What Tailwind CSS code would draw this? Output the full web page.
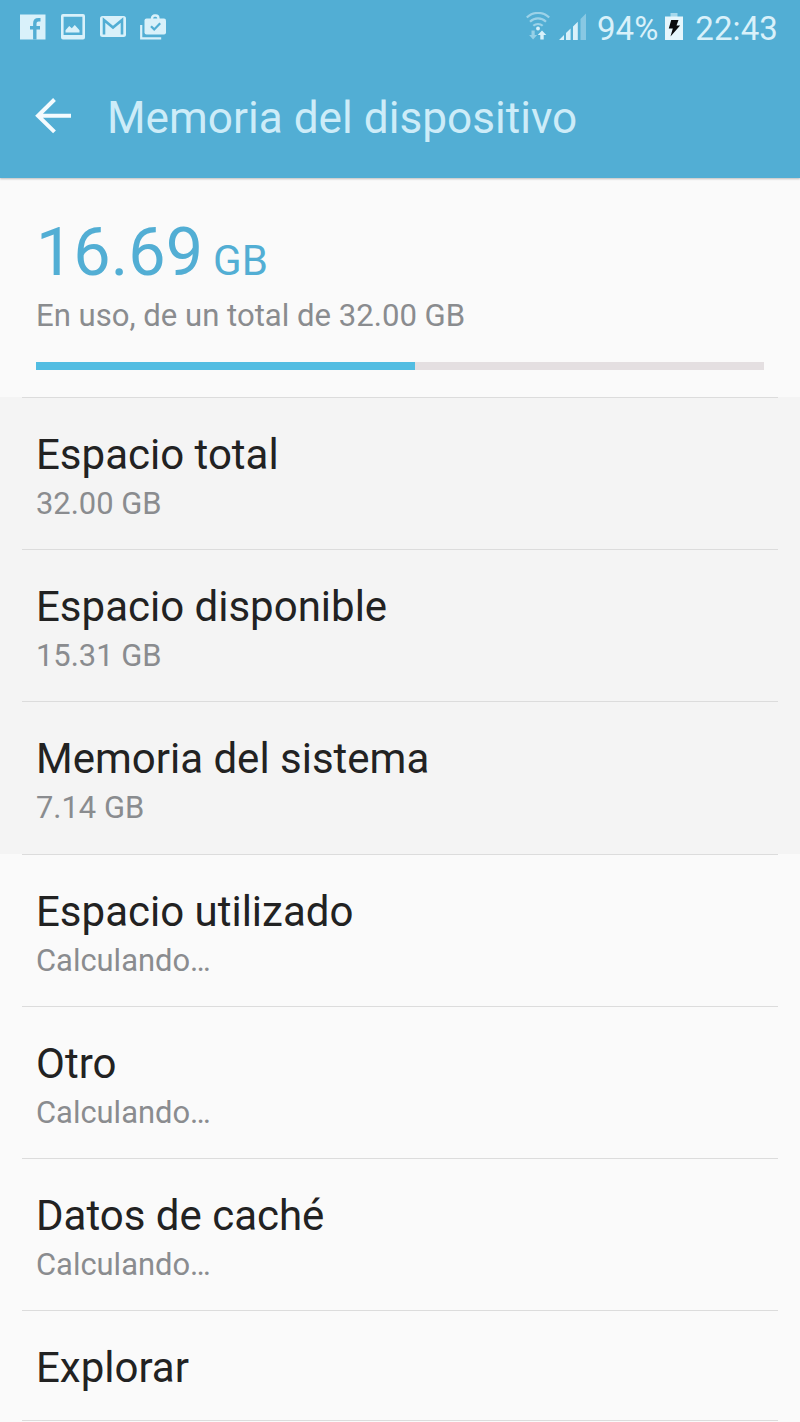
<!DOCTYPE html>
<html lang="es">
<head>
  <meta charset="UTF-8">
  <title>Memoria del dispositivo</title>
  <script src="https://cdn.jsdelivr.net/npm/@tailwindcss/browser@4"></script>
</head>
<body class="w-[800px] h-[1422px] overflow-hidden bg-[#fafafa] font-[Roboto,sans-serif] text-[#222222]">
  <header class="h-[178px] bg-[#52aed4] shadow-[0_1px_2px_rgba(0,0,0,0.25)]">
    <!-- Barra de estado -->
    <div class="h-[56px] flex items-center justify-between pl-5 pr-[22px] text-[#d9f1fa]">
      <div class="flex items-center pb-[2px]">
        <svg class="w-[26px] h-[26px]" viewBox="0 0 26 26">
          <path d="M0 .5h25.500v25H0z" fill="currentColor"/>
          <path d="M14.800 25.500V9.500q0-3.700 3.700-3.700h2M10 13.700h10" fill="none" stroke="#52aed4" stroke-width="3.400"/>
        </svg>
        <svg class="w-[26px] h-[26px] ml-[14px]" viewBox="0 0 26 26">
          <path d="M3 0h20a2 2 0 0 1 2 2v21.500a2 2 0 0 1-2 2H3a2 2 0 0 1-2-2V2a2 2 0 0 1 2-2zM3.600 2.800v18.200h18.800V2.800z" fill="currentColor" fill-rule="evenodd"/>
          <path d="M5.500 18.500v-2.200l3.700-4.300 2.600 2.200 3-3.200 4.700 5.300v2.200z" fill="currentColor"/>
        </svg>
        <svg class="w-[26px] h-[26px] ml-[14px]" viewBox="0 0 26 26">
          <rect x="0" y="2" width="26" height="21" rx="2.500" fill="currentColor"/>
          <path d="M4 20.500V6l9 7.600L22 6v14.500" fill="none" stroke="#52aed4" stroke-width="2.600"/>
        </svg>
        <svg class="w-[26px] h-[26px] ml-[14px]" viewBox="0 0 26 26">
          <path d="M1.200 11v13.300h20" fill="none" stroke="currentColor" stroke-width="2.200"/>
          <rect x="4.500" y="4.500" width="21.500" height="16" rx="2" fill="currentColor"/>
          <path d="M12 6V4.200a2.700 2.700 0 0 1 2.700-2.700h1a2.700 2.700 0 0 1 2.700 2.700V6" fill="none" stroke="currentColor" stroke-width="2.400"/>
          <path d="M11 12.200l3.200 3.200 6-6.200" fill="none" stroke="#52aed4" stroke-width="2.200"/>
        </svg>
      </div>
      <div class="flex items-center text-[33px] leading-[54px]">
        <svg class="w-[24px] h-[30px] mb-[2px]" viewBox="0 0 24 30" fill="none" stroke="currentColor">
          <g stroke-width="2.200" opacity=".55">
            <path d="M.8 5.500a16 16 0 0 1 22.400 0"/>
            <path d="M4 9.700a11.500 11.500 0 0 1 16 0"/>
            <path d="M7.300 13.800a7 7 0 0 1 9.400 0"/>
          </g>
          <circle cx="12" cy="16.500" r="1.900" fill="currentColor" stroke="none"/>
          <path d="M5.500 18.500h3.200v4.500h2.400L7.100 27.500l-4-4.500h2.400z" fill="currentColor" stroke="none" opacity=".5"/>
          <path d="M14.300 27.500h3.400V23h2.600L16 18.500 11.700 23h2.600z" fill="currentColor" stroke="none"/>
        </svg>
        <svg class="w-[28px] h-[28px] ml-[9px] mb-[2px]" viewBox="0 0 28 28" fill="currentColor">
          <path d="M0 27l5-5v5zM7 20l4.600-4.600V27H7zM14 13.500l4.800-4.800V27H14z"/>
          <path d="M21.500 6l5.500-5.500V27h-5.500z" opacity=".4"/>
        </svg>
        <span class="ml-[10px] pt-[2px]">94%</span>
        <svg class="w-[18px] h-[28px] ml-[7px] mb-[2px]" viewBox="0 0 18 28">
          <path d="M5.500 0h7v4h-7z" fill="#a5d8ec"/>
          <path d="M0 3.500h18v23.500H0z" fill="#e6f6fc"/>
          <path d="M6.200 7h7.300l-2 5.500h3.600L5.500 23.500l2.300-8H3.800z" fill="#0b0b0d"/>
        </svg>
        <span class="ml-[12px] pt-[2px] tracking-[0.1px]">22:43</span>
      </div>
    </div>

    <!-- Barra de título -->
    <div class="h-[122px] flex items-center pl-[35px] pb-[2px]">
      <svg class="w-[37px] h-[36px]" viewBox="0 0 37 36" fill="none" stroke="#f4fbfe" stroke-width="4">
        <path d="M19.500 1.500L3 17.700l16.500 16.200M2.500 17.700h33.500"/>
      </svg>
      <h1 class="ml-[35px] pt-[4px] text-[44.200px] leading-[56px] text-[#cdecf8]">Memoria del dispositivo</h1>
    </div>
  </header>

  <main>
    <!-- Resumen de uso -->
    <section class="h-[219px] px-9 pt-[34px]">
      <p class="flex items-baseline text-[66.500px] leading-[80px] text-[#52aed4]">16.69<span class="ml-[10px] text-[42px]">GB</span></p>
      <p class="-mt-[5px] text-[31.100px] leading-[40px] text-[#8a8c8f]">En uso, de un total de 32.00 GB</p>
      <div class="mt-[26px] h-[8px] bg-[#e4dfe1]">
        <div class="h-full bg-[#52bde2]" style="width: 52.1%"></div>
      </div>
    </section>

    <!-- Detalle -->
    <section class="h-[152.200px] bg-[#f4f4f4]">
      <div class="mx-[22px] h-full border-t-[1.500px] border-[#dcdcdc] px-[14px] pt-[32px]">
        <h2 class="text-[42px] leading-[50px]">Espacio total</h2>
        <p class="mt-[4px] text-[30.900px] leading-[40px] text-[#8a8c8f]">32.00 GB</p>
      </div>
    </section>
    <section class="h-[152.200px] bg-[#f4f4f4]">
      <div class="mx-[22px] h-full border-t-[1.500px] border-[#dcdcdc] px-[14px] pt-[32px]">
        <h2 class="text-[42px] leading-[50px]">Espacio disponible</h2>
        <p class="mt-[4px] text-[30.900px] leading-[40px] text-[#8a8c8f]">15.31 GB</p>
      </div>
    </section>
    <section class="h-[152.200px] bg-[#f4f4f4]">
      <div class="mx-[22px] h-full border-t-[1.500px] border-[#dcdcdc] px-[14px] pt-[32px]">
        <h2 class="text-[42px] leading-[50px]">Memoria del sistema</h2>
        <p class="mt-[4px] text-[30.900px] leading-[40px] text-[#8a8c8f]">7.14 GB</p>
      </div>
    </section>
    <section class="h-[152.200px]">
      <div class="mx-[22px] h-full border-t-[1.500px] border-[#dcdcdc] px-[14px] pt-[32px]">
        <h2 class="text-[42px] leading-[50px]">Espacio utilizado</h2>
        <p class="mt-[4px] text-[30.900px] leading-[40px] text-[#8a8c8f]">Calculando…</p>
      </div>
    </section>
    <section class="h-[152.200px]">
      <div class="mx-[22px] h-full border-t-[1.500px] border-[#dcdcdc] px-[14px] pt-[32px]">
        <h2 class="text-[42px] leading-[50px]">Otro</h2>
        <p class="mt-[4px] text-[30.900px] leading-[40px] text-[#8a8c8f]">Calculando…</p>
      </div>
    </section>
    <section class="h-[152.200px]">
      <div class="mx-[22px] h-full border-t-[1.500px] border-[#dcdcdc] px-[14px] pt-[32px]">
        <h2 class="text-[42px] leading-[50px]">Datos de caché</h2>
        <p class="mt-[4px] text-[30.900px] leading-[40px] text-[#8a8c8f]">Calculando…</p>
      </div>
    </section>
    <section class="h-[110px]">
      <div class="mx-[22px] h-[111px] border-y-[1.500px] border-[#dcdcdc] px-[14px] pt-[32px]">
        <h2 class="text-[42px] leading-[50px]">Explorar</h2>
      </div>
    </section>
  </main>
</body>
</html>
